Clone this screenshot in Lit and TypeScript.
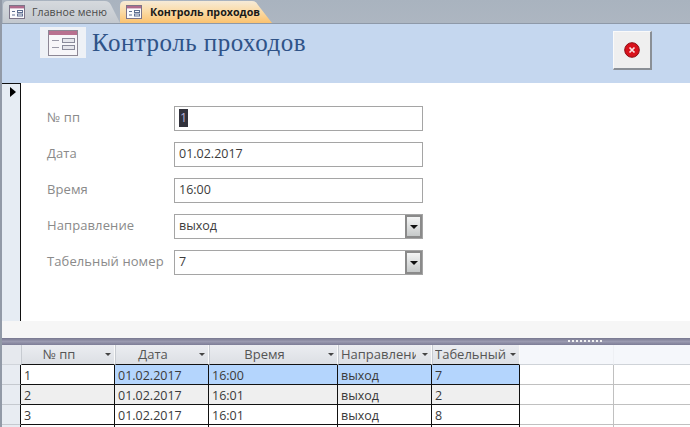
import { LitElement, html, css, svg } from "lit";
import { customElement } from "lit/decorators.js";

const formIcon = svg`<svg class="ficon" viewBox="0 0 16 14" width="16" height="14">
  <rect x=".5" y=".5" width="15" height="13" fill="#fbfbfd" stroke="#7c7488"/>
  <rect x="1" y="1" width="14" height="2.4" fill="#b06a8c"/>
  <path d="M3 6.5h3M3 10h3" stroke="#5e6f92" fill="none"/>
  <rect x="8.5" y="5.5" width="5" height="2" fill="none" stroke="#5e6f92"/>
  <rect x="8.5" y="9" width="5" height="2" fill="none" stroke="#5e6f92"/>
</svg>`;

const bigIcon = svg`<svg viewBox="0 0 30 26" width="30" height="26">
  <rect x=".5" y=".5" width="29" height="25" fill="#f7f6f9" stroke="#8d8795"/>
  <rect x="1" y="1" width="28" height="4" fill="#b8708f"/>
  <path d="M4 10.5h7M4 17.5h7" stroke="#9a9aa8" fill="none"/>
  <rect x="14.500" y="8.500" width="12" height="4" fill="#e6e6ec" stroke="#8a8a9a"/>
  <rect x="14.500" y="15.500" width="12" height="4" fill="#e6e6ec" stroke="#8a8a9a"/>
</svg>`;

const closeIcon = svg`<svg viewBox="0 0 16 16" width="16" height="16">
  <circle cx="8" cy="8" r="7.300" fill="#d8121c" stroke="#8b0d12"/>
  <path d="M5.500 5.500l5 5M10.500 5.500l-5 5" stroke="#fbe3e3" stroke-width="1.700"/>
</svg>`;

const rows = [
  ["1", "01.02.2017", "16:00", "выход", "7"],
  ["2", "01.02.2017", "16:01", "выход", "2"],
  ["3", "01.02.2017", "16:01", "выход", "8"],
  ["", "", "", "", ""],
];
const heads = ["№ пп", "Дата", "Время", "Направлени", "Табельный"];
const fields = [
  { l: "№ пп", v: "1", sel: true },
  { l: "Дата", v: "01.02.2017" },
  { l: "Время", v: "16:00" },
  { l: "Направление", v: "выход", combo: true },
  { l: "Табельный номер", v: "7", combo: true },
];

@customElement("app-root")
export class AppRoot extends LitElement {
  static styles = css`
    :host {
      display: block;
      width: 690px;
      height: 427px;
      overflow: hidden;
      background: #fff;
      font-family: "Open Sans", "Noto Sans", sans-serif;
      font-size: 12px;
      color: #333;
    }
    .page {
      border-left: 2px solid #929aa7;
      height: 427px;
      box-sizing: border-box;
    }
    .tabs {
      height: 23px;
      display: flex;
      padding-left: 1px;
      background: linear-gradient(#a9b3bf, #adb6c1);
      border-bottom: 1px solid #8e99a8;
    }
    .tab {
      height: 23px;
      display: flex;
      align-items: center;
      gap: 7px;
      padding-left: 6px;
      box-sizing: border-box;
      font-size: 10.500px;
      letter-spacing: 0.100px;
    }
    .t1 {
      width: 117px;
      background: linear-gradient(#d6dade, #c3c8ce);
      color: #4a4a4a;
      clip-path: path("M0 23V6Q0 1 5 1H102Q106 1 108 5L117 23Z");
    }
    .t2 {
      width: 152px;
      gap: 8px;
      font-weight: 700;
      font-size: 10.700px;
      letter-spacing: 0;
      color: #1a1a1a;
      background: linear-gradient(#f5ecdc 0%, #fbdba6 50%, #fbc26f 100%);
      clip-path: path("M0 23V6Q0 1 5 1H132Q136 1 138 5L152 23Z");
    }
    .ficon { flex: none; }
    .head {
      height: 59px;
      background: #c5d7ef;
      display: flex;
      align-items: flex-start;
      justify-content: space-between;
    }
    .brand { display: flex; align-items: flex-start; }
    .logo {
      margin-left: 38px;
      margin-top: 3px;
      width: 46px;
      height: 31px;
      background: #eef1f6;
      display: flex;
      align-items: center;
      justify-content: center;
    }
    h1 {
      margin: 3px 0 0 6px;
      font: 400 25px/32px "Liberation Serif", serif;
      letter-spacing: 0.500px;
      color: #2f5388;
    }
    .close {
      width: 39px;
      height: 39px;
      margin: 7px 38px 0 0;
      box-sizing: border-box;
      background: #efefef;
      border-top: 1px solid #fafafa;
      border-left: 1px solid #fafafa;
      border-right: 2px solid #8a8f96;
      border-bottom: 2px solid #8a8f96;
      display: flex;
      align-items: center;
      justify-content: center;
    }
    .body {
      display: flex;
      height: 238px;
    }
    .sel {
      width: 18px;
      flex: none;
      background: #e6ecf3;
      border-right: 1px solid #111;
      border-top: 1px solid #111;
      padding-top: 3px;
    }
    .arrow {
      margin: 0 0 0 8px;
      width: 0;
      height: 0;
      border-left: 6px solid #000;
      border-top: 5px solid transparent;
      border-bottom: 5px solid transparent;
    }
    .form {
      flex: 1;
      padding: 23px 0 0 26px;
      display: flex;
      flex-direction: column;
      gap: 11px;
    }
    .row { display: flex; height: 25px; }
    .lbl {
      width: 127px;
      font-size: 13px;
      line-height: 22px;
      color: #8a8a8a;
      white-space: nowrap;
      letter-spacing: 0.100px;
    }
    .inp {
      width: 249px;
      height: 25px;
      box-sizing: border-box;
      border: 1px solid #a5a5a5;
      display: flex;
      align-items: center;
      justify-content: space-between;
      padding-left: 4px;
      font-size: 12.500px;
      color: #3c3c3c;
      background: #fff;
    }
    .inp > span { margin-bottom: 2px; }
    .picked { background: #32323c; color: #b8b0d8; line-height: 18px; padding: 0 1px; }
    .drop {
      width: 17px;
      height: 23px;
      box-sizing: border-box;
      border: 2px solid #8a8a8a;
      background: linear-gradient(#f4f5f5, #c6c9c9);
      display: flex;
      align-items: center;
      justify-content: center;
    }
    .drop i {
      width: 0;
      height: 0;
      border-left: 4px solid transparent;
      border-right: 4px solid transparent;
      border-top: 4px solid #111;
    }
    .foot {
      height: 17px;
      background: #f6f6f6;
    }
    .split {
      height: 7px;
      background: linear-gradient(#77778f, #9a9ab0 50%, #7c7c96);
      position: relative;
    }
    .grip {
      position: absolute;
      left: 566px;
      top: 2px;
      width: 35px;
      height: 2px;
      background: repeating-linear-gradient(90deg, #f2f2f2 0 2px, transparent 2px 4px);
    }
    .sheet {
      display: grid;
      grid-template-columns: 19px 94px 94px 129px 94px 88px 94px 1fr;
      grid-auto-rows: 20px;
      font-size: 12.500px;
      background: #fff;
    }
    .c {
      box-sizing: border-box;
      height: 20px;
      padding-left: 3px;
      line-height: 21px;
      white-space: nowrap;
      overflow: hidden;
      border-right: 1px solid #111;
      border-bottom: 1px solid #111;
      color: #3a3a3a;
    }
    .alt { background: #efefef; }
    .cur { background: #b4d5fd; }
    .plain { background: #fff; }
    .hd {
      box-sizing: border-box;
      height: 20px;
      background: linear-gradient(#ebedf1, #dcdfe4);
      border-right: 1px solid #fafafa;
      border-bottom: 1px solid #111;
      border-left: 1px solid #c7cbd1;
      display: flex;
      align-items: center;
      justify-content: center;
      position: relative;
      color: #555;
      font-size: 13px;
      padding: 0 18px 2px 0;
      overflow: hidden;
      white-space: nowrap;
    }
    .hd.clip { justify-content: flex-start; padding-left: 2px; padding-right: 0; }
    .hd.clip span { width: 75px; overflow: hidden; display: block; }
    .hd i {
      position: absolute;
      right: 3px;
      top: 8px;
      width: 0;
      height: 0;
      border-left: 3px solid transparent;
      border-right: 3px solid transparent;
      border-top: 3px solid #444;
    }
    .hdfill { height: 20px; box-sizing: border-box; background: #f5f7fb; border-bottom: 1px solid #cfd3d8; }
    .hdfill.a { border-right: 1px solid #eef0f4; }
    .gutter { box-sizing: border-box; height: 20px; background: #e8ecf2; border-right: 1px solid #111; border-bottom: 1px solid #c5c9cf; }
    .gutter.top { border-bottom: 1px solid #d0d4da; border-right: 0; background: #e6e9ee; }
    .blank { box-sizing: border-box; height: 20px; border-bottom: 1px solid #c0c0c0; background: #fff; }
    .blank.a { border-right: 1px solid #c0c0c0; }
  `;

  render() {
    return html`
      <div class="page">
        <div class="tabs">
          <div class="tab t1">${formIcon}<span>Главное меню</span></div>
          <div class="tab t2">${formIcon}<span>Контроль проходов</span></div>
        </div>
        <div class="head">
          <div class="brand">
            <div class="logo">${bigIcon}</div>
            <h1>Контроль проходов</h1>
          </div>
          <div class="close">${closeIcon}</div>
        </div>
        <div class="body">
          <div class="sel"><div class="arrow"></div></div>
          <div class="form">
            ${fields.map(
              (f) => html`<div class="row">
                <div class="lbl">${f.l}</div>
                <div class="inp">
                  ${f.sel ? html`<span class="picked">${f.v}</span>` : html`<span>${f.v}</span>`}
                  ${f.combo ? html`<div class="drop"><i></i></div>` : ""}
                </div>
              </div>`
            )}
          </div>
        </div>
        <div class="foot"></div>
        <div class="split"><div class="grip"></div></div>
        <div class="sheet">
          <div class="gutter top"></div>
          ${heads.map(
            (h, i) => html`<div class="hd ${i > 2 ? "clip" : ""}"><span>${h}</span><i></i></div>`
          )}
          <div class="hdfill a"></div>
          <div class="hdfill"></div>
          ${rows.map(
            (r, i) => html`
              <div class="gutter"></div>
              ${r.map((v, j) => {
                const cls = i === 0 ? (j === 0 ? "plain" : "cur") : i === 1 ? "alt" : "plain";
                return html`<div class="c ${cls}">${v}</div>`;
              })}
              <div class="blank a"></div>
              <div class="blank"></div>
            `
          )}
        </div>
      </div>
    `;
  }
}
